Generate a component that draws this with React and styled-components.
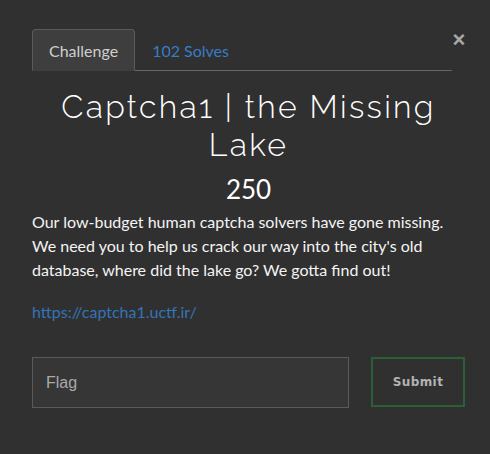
import React, { Component } from 'react';
import styled, { createGlobalStyle } from 'styled-components';

const GlobalStyle = createGlobalStyle`
  html, body {
    margin: 0;
    padding: 0;
    background: #303030;
  }
  body {
    font-family: Lato, "Noto Sans", sans-serif;
    color: #fff;
  }
`;

const Modal = styled.div`
  position: relative;
  width: 490px;
  height: 454px;
  box-sizing: border-box;
  padding: 29px 25px 0 32px;
`;

const CloseButton = styled.button`
  position: absolute;
  top: 30px;
  right: 23px;
  width: 16px;
  height: 20px;
  padding: 0;
  border: none;
  background: none;
  color: #a8a8a8;
  font-family: "Liberation Sans", Arial, sans-serif;
  font-size: 22px;
  font-weight: 700;
  line-height: 20px;
  cursor: pointer;
`;

const TabBar = styled.div`
  display: flex;
  align-items: stretch;
  margin-right: 13px;
  border-bottom: 1px solid #666;
`;

const Tab = styled.div`
  height: 42px;
  box-sizing: border-box;
  display: flex;
  align-items: center;
  padding: 0 16px;
  margin-bottom: -1px;
  font-size: 16px;
  border: 1px solid ${props => (props.active ? '#5a5a5a' : 'transparent')};
  border-bottom: 1px solid ${props => (props.active ? '#3e3e3e' : 'transparent')};
  border-radius: 4px 4px 0 0;
  background: ${props => (props.active ? '#3e3e3e' : 'transparent')};
  color: ${props => (props.active ? '#cfcfcf' : '#3a7cc4')};
`;

const Title = styled.h1`
  margin: 17px 0 0;
  text-align: center;
  font-family: Raleway, "Open Sans", sans-serif;
  font-weight: 300;
  font-size: 32px;
  line-height: 38px;
  letter-spacing: 2.3px;
  color: #fff;
`;

const Points = styled.div`
  text-align: center;
  font-size: 26px;
  font-weight: 400;
  line-height: 34px;
  margin-top: 8px;
  color: #fff;
`;

const Description = styled.p`
  margin: 4px 0 0;
  font-size: 16px;
  line-height: 24px;
  color: #f4f4f4;
`;

const Link = styled.a`
  display: block;
  margin-top: 18px;
  font-size: 16px;
  line-height: 24px;
  color: #3374b8;
  text-decoration: none;
`;

const FlagForm = styled.form`
  display: flex;
  align-items: flex-start;
  gap: 22px;
  margin-top: 33px;
`;

const FlagInput = styled.input`
  flex: 1;
  min-width: 0;
  height: 51px;
  box-sizing: border-box;
  padding: 0 13px;
  border: 1px solid #5a5a5a;
  background: #363636;
  color: #ddd;
  font-family: "Liberation Sans", Arial, sans-serif;
  font-size: 16px;
  outline: none;

  &::placeholder {
    color: #a9a9a9;
  }
`;

const SubmitButton = styled.button`
  width: 94px;
  height: 50px;
  box-sizing: border-box;
  border: 2px solid #2b5f35;
  background: transparent;
  color: #b3b3b3;
  font-family: "DejaVu Sans", Verdana, sans-serif;
  font-size: 12px;
  font-weight: 700;
  letter-spacing: 0.4px;
  cursor: pointer;
`;

class App extends Component {
  state = {
    flag: ''
  };

  handleChange = e => {
    this.setState({ flag: e.target.value });
  };

  handleSubmit = e => {
    e.preventDefault();
  };

  render() {
    return (
      <Modal>
        <GlobalStyle />
        <CloseButton aria-label="Close">×</CloseButton>
        <TabBar>
          <Tab active>Challenge</Tab>
          <Tab>102 Solves</Tab>
        </TabBar>
        <Title>
          Captcha1 | the Missing
          <br />
          Lake
        </Title>
        <Points>250</Points>
        <Description>
          Our low-budget human captcha solvers have gone missing. We need you to help us crack
          our way into the city's old database, where did the lake go? We gotta find out!
        </Description>
        <Link href="https://captcha1.uctf.ir/">https://captcha1.uctf.ir/</Link>
        <FlagForm onSubmit={this.handleSubmit}>
          <FlagInput
            placeholder="Flag"
            value={this.state.flag}
            onChange={this.handleChange}
          />
          <SubmitButton type="submit">Submit</SubmitButton>
        </FlagForm>
      </Modal>
    );
  }
}

export default App;
